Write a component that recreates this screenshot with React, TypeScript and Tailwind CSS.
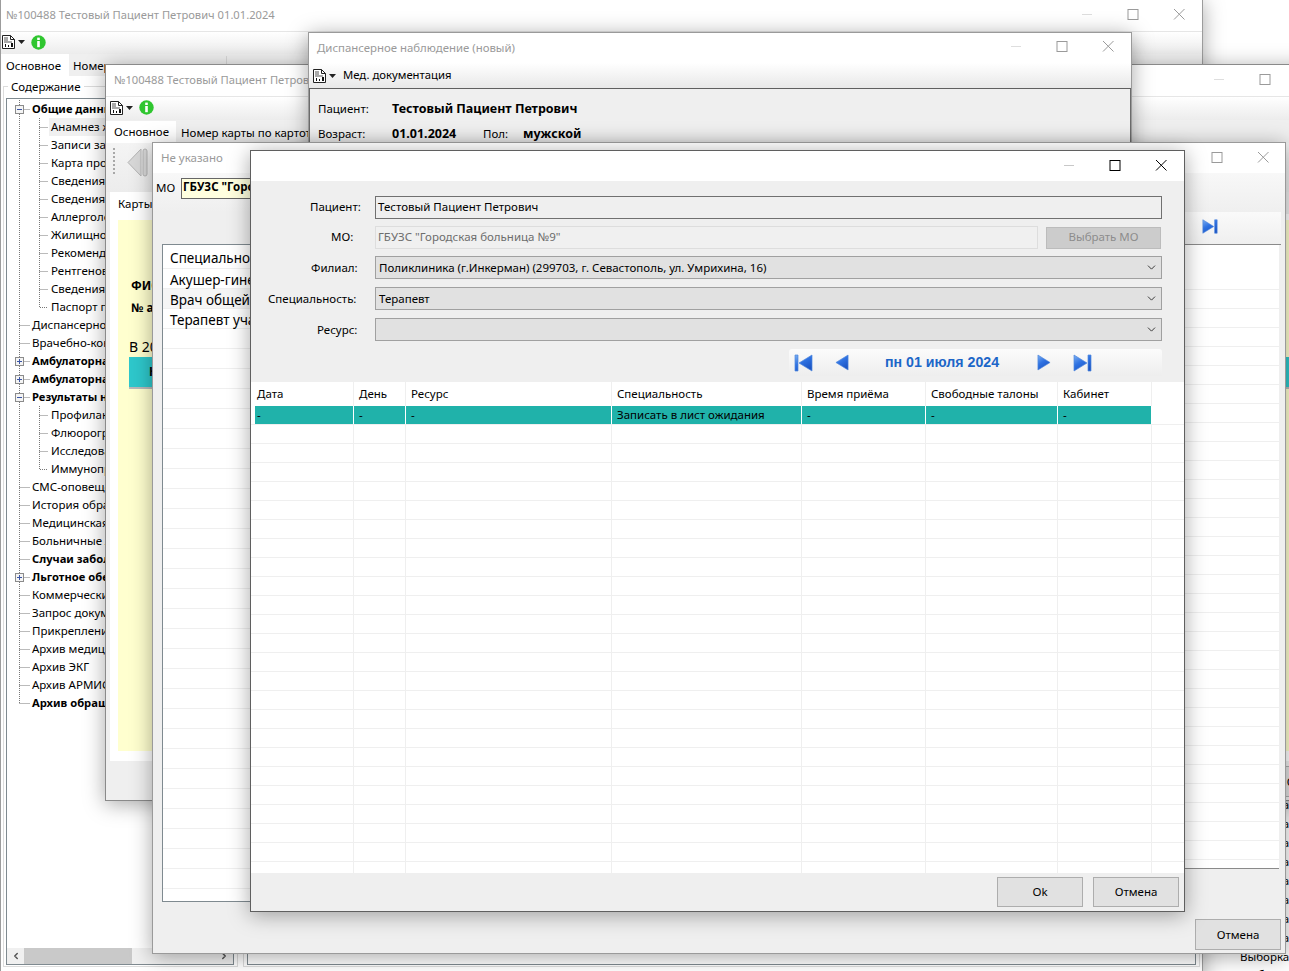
import type { ReactNode } from 'react';
import { ChevronDown, ChevronLeft, ChevronRight } from 'lucide-react';

const FONT = "font-['Noto_Sans','Open_Sans',sans-serif]";

const tree: { t: string; lvl: 0 | 1; bold?: boolean; box?: '+' | '-'; last?: boolean; active?: boolean }[] = [
  { t: 'Общие данные', lvl: 0, bold: true, box: '-' },
  { t: 'Анамнез жизни', lvl: 1, active: true },
  { t: 'Записи за период', lvl: 1 },
  { t: 'Карта профилактики', lvl: 1 },
  { t: 'Сведения о прививках', lvl: 1 },
  { t: 'Сведения о родах', lvl: 1 },
  { t: 'Аллергологический', lvl: 1 },
  { t: 'Жилищно-бытовые', lvl: 1 },
  { t: 'Рекомендации', lvl: 1 },
  { t: 'Рентгеновские', lvl: 1 },
  { t: 'Сведения об учёте', lvl: 1 },
  { t: 'Паспорт пациента', lvl: 1, last: true },
  { t: 'Диспансерное', lvl: 0 },
  { t: 'Врачебно-контрольная', lvl: 0 },
  { t: 'Амбулаторная карта', lvl: 0, bold: true, box: '+' },
  { t: 'Амбулаторная помощь', lvl: 0, bold: true, box: '+' },
  { t: 'Результаты наблюдения', lvl: 0, bold: true, box: '-' },
  { t: 'Профилактика', lvl: 1 },
  { t: 'Флюорография', lvl: 1 },
  { t: 'Исследования', lvl: 1 },
  { t: 'Иммунопрофилактика', lvl: 1, last: true },
  { t: 'СМС-оповещение', lvl: 0 },
  { t: 'История обращений', lvl: 0 },
  { t: 'Медицинская карта', lvl: 0 },
  { t: 'Больничные листы', lvl: 0 },
  { t: 'Случаи заболевания', lvl: 0, bold: true },
  { t: 'Льготное обеспечение', lvl: 0, bold: true, box: '+' },
  { t: 'Коммерческие услуги', lvl: 0 },
  { t: 'Запрос документов', lvl: 0 },
  { t: 'Прикрепление', lvl: 0 },
  { t: 'Архив медицинских', lvl: 0 },
  { t: 'Архив ЭКГ', lvl: 0 },
  { t: 'Архив АРМИС', lvl: 0 },
  { t: 'Архив обращений', lvl: 0, bold: true },
];

const columns = [
  { t: 'Дата', w: 'w-[99px]', v: '-' },
  { t: 'День', w: 'w-[52px]', v: '-' },
  { t: 'Ресурс', w: 'w-[206px]', v: '-' },
  { t: 'Специальность', w: 'w-[190px]', v: 'Записать в лист ожидания' },
  { t: 'Время приёма', w: 'w-[124px]', v: '-' },
  { t: 'Свободные талоны', w: 'w-[132px]', v: '-' },
  { t: 'Кабинет', w: 'w-[94px]', v: '-' },
];

function DocIcon() {
  return (
    <svg width="13" height="14" viewBox="0 0 13 14" className="shrink-0">
      <path d="M.5.5h8l4 4v9H.5z" fill="#fff" stroke="#222" />
      <path d="M8.5.5v4h4" fill="none" stroke="#222" />
      <path d="M2 3h4M2 5h4M2 7h8" stroke="#555" />
      <path d="M3 12V9h1v3zM6 12V10h1v2zM9 12V8h2v4z" fill="#111" />
    </svg>
  );
}

function Caret() {
  return (
    <svg width="7" height="4" viewBox="0 0 7 4" className="shrink-0">
      <path d="M0 0h7L3.5 4z" fill="#222" />
    </svg>
  );
}

function InfoIcon() {
  return (
    <svg width="15" height="15" viewBox="0 0 15 15" className="shrink-0">
      <circle cx="7.5" cy="7.5" r="7.2" fill="#2fc62f" />
      <rect x="6.2" y="2.6" width="2.6" height="2.4" fill="#fff" />
      <rect x="6.2" y="6" width="2.6" height="6.2" fill="#fff" />
    </svg>
  );
}

function NavIcon({ kind, w, h }: { kind: 'first' | 'prev' | 'next' | 'last'; w: number; h: number }) {
  const d = {
    first: 'M1 1h3v16H1zM18 1v16L5 9z',
    prev: 'M14 1v16L1 9z',
    next: 'M1 1v16L14 9z',
    last: 'M1 1v16l13-8zM15 1h3v16h-3z',
  }[kind];
  const vb = kind === 'first' || kind === 'last' ? '0 0 19 18' : '0 0 15 18';
  return (
    <svg width={w} height={h} viewBox={vb} className="shrink-0">
      <defs>
        <linearGradient id="navblue" x1="0" y1="0" x2="0.6" y2="1">
          <stop offset="0" stopColor="#7db0f2" />
          <stop offset="0.5" stopColor="#2f72e2" />
          <stop offset="1" stopColor="#1c55c4" />
        </linearGradient>
      </defs>
      <path d={d} fill="url(#navblue)" stroke="#4f86dc" strokeWidth="0.7" />
    </svg>
  );
}

function WinButtons({ dark, className = '' }: { dark?: boolean; className?: string }) {
  const c = dark ? '#000' : '#9a9a9a';
  return (
    <div className={`mb-[2px] ml-auto flex items-center ${className}`}>
      <div className="flex w-[46px] justify-center">
        <div className={dark ? 'h-px w-[10px] bg-[#c8c8c8]' : 'h-px w-[10px] bg-[#dedede]'} />
      </div>
      <svg width="46" height="11" viewBox="0 0 46 11">
        <rect x="18" y="0.5" width="10" height="10" fill="none" stroke={c} />
      </svg>
      <svg width="46" height="11" viewBox="0 0 46 11">
        <path d="M18 0l10.5 10.5M28.5 0L18 10.5" stroke={c} />
      </svg>
    </div>
  );
}

function Win({ className, children }: { className: string; children: ReactNode }) {
  return (
    <div className={`absolute flex flex-col overflow-hidden border bg-[#efefef] shadow-[0_3px_20px_rgba(0,0,0,0.35)] ${className}`}>
      {children}
    </div>
  );
}

function TreeRow({ item, index }: { item: (typeof tree)[number]; index: number }) {
  const isLast = index === tree.length - 1;
  const width = item.lvl === 0 ? 23 : 42;
  return (
    <div className="flex h-[18px] items-center">
      <svg width={width} height="18" viewBox={`0 0 ${width} 18`} className="shrink-0">
        <path
          d={isLast ? 'M12.5 0v9' : 'M12.5 0v18'}
          stroke="#777"
          strokeDasharray="1 1"
          fill="none"
        />
        {item.lvl === 0 && <path d="M12.5 9.5H23" stroke="#777" strokeDasharray="1 1" />}
        {item.lvl === 1 && (
          <path d={item.last ? 'M32.5 0v9.5H41' : 'M32.5 0v18M32.5 9.5H41'} stroke="#777" strokeDasharray="1 1" fill="none" />
        )}
        {item.box && (
          <>
            <rect x="8.5" y="5.5" width="8" height="8" fill="#f4f4f4" stroke="#8b8b8b" />
            <path d="M10 9.5h5" stroke="#3b55a5" />
            {item.box === '+' && <path d="M12.5 7v5" stroke="#3b55a5" />}
          </>
        )}
      </svg>
      <span className={`whitespace-nowrap px-[2px] leading-[18px] ${item.bold ? 'text-[11.2px] font-bold' : ''} ${item.active ? 'bg-[#f0f0f0]' : ''}`}>
        {item.t}
      </span>
    </div>
  );
}

function MainWindow() {
  return (
    <Win className="left-0 top-[-1px] h-[990px] w-[1203px] border-[#9c9c9c]">
      <div className="flex h-[31px] shrink-0 items-center bg-white pl-[5px] text-[#9a9a9a]">
        <span className="text-[11.2px]">№100488 Тестовый Пациент Петрович 01.01.2024</span>
        <WinButtons />
      </div>
      <div className="flex h-[23px] shrink-0 items-center gap-[3px] border-t border-[#e6e6e6] bg-gradient-to-b from-white to-[#ececec] pb-[2px] pl-[1px]">
        <DocIcon />
        <Caret />
        <div className="ml-[3px]"><InfoIcon /></div>
      </div>
      <div className="flex h-[22px] shrink-0 items-end bg-[#efefef] text-[11.5px]">
        <div className="flex h-[22px] w-[68px] items-center bg-white pl-[5px] pt-[2px]">Основное</div>
        <div className="flex h-[20px] w-[158px] items-center border-r border-[#d8d8d8] pl-[4px]">Номер карты</div>
      </div>
      <div className="flex min-h-0 flex-1 gap-[5px] bg-white px-[2px] pt-[10px]">
        <div className="relative mb-[5px] h-[881px] w-[235px] border border-[#dcdcdc] pb-[1px] pl-[2px] pr-[3px] pt-[11px]">
          <span className="absolute left-[4px] top-[-9px] bg-white px-[3px] text-[11.5px]">Содержание</span>
          <div className="flex h-[867px] flex-col justify-between border border-[#7f8a90] pl-0 pt-[1px] text-[11.5px]">
            <div>
              {tree.map((item, i) => (
                <TreeRow key={i} item={item} index={i} />
              ))}
            </div>
            <div className="flex h-[16px] items-center bg-[#f0f0f0]">
              <div className="flex w-[17px] justify-center">
                <ChevronLeft size={10} strokeWidth={3.5} className="text-[#555]" />
              </div>
              <div className="h-full w-[108px] bg-[#c9c9c9]" />
              <div className="ml-auto flex w-[18px] justify-center">
                <ChevronRight size={10} strokeWidth={3.5} className="text-[#555]" />
              </div>
            </div>
          </div>
        </div>
        <div className="mb-[5px] h-[881px] flex-1 border border-[#dcdcdc] p-[3px] pb-[1px]">
          <div className="h-[875px] border border-[#7f8a90]" />
        </div>
      </div>
    </Win>
  );
}

function CardWindow() {
  return (
    <Win className="left-[105px] top-[64px] h-[737px] w-[1250px] border-[#8a8a8a]">
      <div className="flex h-[31px] shrink-0 items-center bg-white pl-[8px] text-[#9a9a9a]">
        <span className="whitespace-nowrap pb-[1px] text-[11.2px]">№100488 Тестовый Пациент Петрович 01.01.2024</span>
        <WinButtons className="pr-[20px]" />
      </div>
      <div className="flex h-[24px] shrink-0 items-center gap-[3px] border-t border-[#e6e6e6] bg-gradient-to-b from-white to-[#ececec] pb-[2px] pl-[4px]">
        <DocIcon />
        <Caret />
        <div className="ml-[3px]"><InfoIcon /></div>
      </div>
      <div className="flex h-[23px] shrink-0 items-end text-[11.5px]">
        <div className="flex h-[22px] w-[70px] items-center bg-white pl-[8px]">Основное</div>
        <div className="flex h-[20px] items-center whitespace-nowrap pl-[5px]">Номер карты по картотеке</div>
      </div>
      <div className="flex h-[49px] shrink-0 items-start bg-gradient-to-b from-[#f4f4f4] to-[#ececec] pl-[7px] pt-[5px]">
        <div className="h-[26px] border-l-2 border-dotted border-[#a8a8a8]" />
        <svg width="21" height="29" viewBox="0 0 21 29" className="ml-[12px] shrink-0">
          <path d="M14 1v27L1 14.5z" fill="#d8d8d8" stroke="#b4b4b4" />
          <rect x="16" y="1" width="4" height="27" rx="2" fill="#d8d8d8" stroke="#b4b4b4" />
        </svg>
      </div>
      <div className="flex h-[22px] shrink-0 bg-[#efefef] pl-[4px] text-[11.5px]">
        <div className="w-[46px] bg-white pl-[8px] pt-[3px]">Карты</div>
      </div>
      <div className="ml-[4px] flex h-[547px] shrink-0 bg-white pb-[10px] pl-[8px] pt-[6px]">
        <div className="flex-1 bg-[#ffffcf] pl-[11px] text-[12px]">
          <div className="pl-[2px] pt-[57px] font-bold">ФИО пациента</div>
          <div className="pl-[2px] pt-[4px] font-bold">№ амбулаторной карты</div>
          <div className="pt-[20px] text-[14px] leading-[20px]">В 2024 году</div>
          <div className="flex h-[32px] items-center border-b-2 border-[#b9b9b9] bg-[#2ec8cc] pl-[20px] font-bold">Карта</div>
        </div>
      </div>
      <div className="ml-[1159px] mt-[5px] flex h-[31px] w-[86px] shrink-0 items-center justify-center border border-[#adadad] bg-[#e1e1e1] text-[11.5px]">Отмена</div>
    </Win>
  );
}

function DispWindow() {
  return (
    <Win className="left-[308px] top-[32px] h-[300px] w-[824px] border-[#9a9a9a]">
      <div className="flex h-[30px] shrink-0 items-center bg-white pb-[1px] pl-[8px] text-[11.4px] text-[#9a9a9a]">
        Диспансерное наблюдение (новый)
        <WinButtons />
      </div>
      <div className="flex h-[26px] shrink-0 items-center gap-[3px] border-b border-[#5f5f5f] bg-gradient-to-b from-white to-[#e8e8e8] pl-[4px] text-[11.3px]">
        <DocIcon />
        <Caret />
        <span className="ml-[4px]">Мед. документация</span>
      </div>
      <div className="flex-1 border-x border-[#6b6b6b] pl-[8px] pt-[10px] text-[11.5px]">
        <div className="flex h-[20px] items-center">
          <span className="w-[74px]">Пациент:</span>
          <span className="text-[12.5px] font-bold">Тестовый Пациент Петрович</span>
        </div>
        <div className="mt-[5px] flex h-[20px] items-center">
          <span className="w-[74px]">Возраст:</span>
          <span className="w-[91px] text-[12.5px] font-bold">01.01.2024</span>
          <span className="w-[40px]">Пол:</span>
          <span className="text-[12.5px] font-bold">мужской</span>
        </div>
      </div>
    </Win>
  );
}

function ListWindow() {
  return (
    <Win className="left-[152px] top-[142px] h-[812px] w-[1134px] border-[#9a9a9a]">
      <div className="flex h-[30px] shrink-0 items-center bg-white pl-[8px] text-[11.5px] text-[#9a9a9a]">
        Не указано
        <WinButtons className="-mr-px" />
      </div>
      <div className="flex h-[39px] shrink-0 items-start bg-gradient-to-b from-[#f8f8f8] to-[#efefef] pl-[3px] pt-[5px] text-[11.5px]">
        <span className="w-[25px] pt-[1px]">МО</span>
        <div className="h-[21px] w-[300px] whitespace-nowrap border border-[#666] bg-[#ffffdf] pl-[1px] font-bold leading-[16px]">ГБУЗС "Городская больница №9"</div>
      </div>
      <div className="flex h-[690px] shrink-0">
        <div className="ml-[9px] mt-[32px] h-[658px] w-[400px] overflow-hidden border border-[#7f8a90] bg-white text-[13.5px]">
          <div className="flex h-[24px] items-center border-b border-[#efefef] pl-[7px] pt-[3px]">Специальность</div>
          <div className="flex h-[20px] items-center border-b border-[#efefef] pl-[7px] pt-[4px]">Акушер-гинеколог</div>
          <div className="flex h-[20px] items-center border-b border-[#efefef] bg-[#f5f5f5] pl-[7px] pt-[4px]">Врач общей практики</div>
          <div className="flex h-[20px] items-center border-b border-[#efefef] pl-[7px] pt-[4px]">Терапевт участковый</div>
          {Array.from({ length: 29 }, (_, i) => (
            <div key={i} className="h-[20px] border-b border-[#efefef]" />
          ))}
        </div>
        <div className="ml-[16px] flex h-[657px] flex-1 flex-col pr-[6px]">
          <div className="-mr-[2px] flex h-[33px] shrink-0 items-center justify-end border-b border-[#8a8a8a] bg-gradient-to-b from-[#fafafa] to-[#efefef] pb-[4px] pr-[63px]">
            <NavIcon kind="last" w={16} h={17} />
          </div>
          <div className="flex-1 overflow-hidden border-b border-[#8a8a8a] bg-white pt-[44px]">
            {Array.from({ length: 31 }, (_, i) => (
              <div key={i} className="h-[19px] border-t border-[#efefef]" />
            ))}
          </div>
        </div>
      </div>
      <div className="ml-auto mr-[4px] mt-[17px] flex h-[31px] w-[86px] shrink-0 items-center justify-center border border-[#adadad] bg-[#e1e1e1] text-[11.5px]">Отмена</div>
    </Win>
  );
}

function Label({ children, className }: { children: ReactNode; className: string }) {
  return <span className={`shrink-0 text-[11.5px] ${className}`}>{children}</span>;
}

function Select({ value }: { value?: string }) {
  return (
    <div className="flex h-[23px] w-[787px] items-center border border-[#a0a0a0] bg-[#e1e1e1] pl-[3px] pr-[3px] text-[11.5px]">
      {value}
      <ChevronDown size={13} strokeWidth={1.6} className="ml-auto text-[#222]" />
    </div>
  );
}

function Dialog() {
  return (
    <Win className="left-[250px] top-[150px] h-[762px] w-[935px] border-[#5f5f5f]">
      <div className="flex h-[30px] shrink-0 items-center bg-white"><WinButtons dark /></div>
      <div className="flex h-[168px] shrink-0 flex-col pt-[15px]">
        <div className="flex h-[23px] items-center pl-[59px]">
          <Label className="w-[65px] pb-[2px]">Пациент:</Label>
          <div className="flex h-[23px] w-[787px] items-center border border-[#707070] pb-[2px] pl-[2px] text-[11.5px]">Тестовый Пациент Петрович</div>
        </div>
        <div className="mt-[7px] flex h-[23px] items-center pl-[80px]">
          <Label className="w-[44px] pb-[2px]">МО:</Label>
          <div className="flex h-[23px] w-[663px] items-center border border-[#dddddd] bg-[#f0f0f0] pb-[2px] pl-[2px] text-[11.5px] text-[#6d6d6d]">ГБУЗС "Городская больница №9"</div>
          <div className="ml-[8px] flex h-[22px] w-[115px] items-center justify-center border border-[#bcbcbc] bg-[#cccccc] pb-[2px] text-[11.5px] text-[#8c8c8c]">Выбрать МО</div>
        </div>
        <div className="mt-[7px] flex h-[23px] items-center pl-[60px]">
          <Label className="w-[64px]">Филиал:</Label>
          <Select value="Поликлиника (г.Инкерман) (299703, г. Севастополь, ул. Умрихина, 16)" />
        </div>
        <div className="mt-[8px] flex h-[23px] items-center pl-[17px]">
          <Label className="w-[107px]">Специальность:</Label>
          <Select value="Терапевт" />
        </div>
        <div className="mt-[8px] flex h-[23px] items-center pl-[66px]">
          <Label className="w-[58px]">Ресурс:</Label>
          <Select />
        </div>
      </div>
      <div className="ml-[538px] flex h-[27px] w-[373px] shrink-0 items-center rounded-t-[3px] bg-gradient-to-b from-[#fbfbfb] to-[#eeeeee] pl-[5px]">
        <NavIcon kind="first" w={19} h={18} />
        <div className="ml-[22px]"><NavIcon kind="prev" w={14} h={17} /></div>
        <span className="ml-[36px] w-[115px] whitespace-nowrap pt-[1px] font-['Liberation_Sans',sans-serif] text-[14.2px] font-bold text-[#1c66c8]">пн 01 июля 2024</span>
        <div className="ml-[37px]"><NavIcon kind="next" w={14} h={17} /></div>
        <div className="ml-[22px]"><NavIcon kind="last" w={19} h={18} /></div>
      </div>
      <div className="mt-[6px] flex min-h-0 flex-1 flex-col overflow-hidden bg-white text-[11.5px]">
        <div className="flex h-[24px] shrink-0 pl-[4px]">
          {columns.map((c) => (
            <div key={c.t} className={`flex items-center border-r border-[#efefef] pl-[5px] ${c.w} first:pl-[2px]`}>{c.t}</div>
          ))}
        </div>
        <div className="flex h-[19px] shrink-0 border-b border-[#efefef] pl-[4px]">
          {columns.map((c) => (
            <div key={c.t} className={`flex items-center border-r border-white bg-[#20b2aa] pl-[5px] ${c.w} first:pl-[2px]`}>{c.v}</div>
          ))}
        </div>
        {Array.from({ length: 26 }, (_, i) => (
          <div key={i} className="flex h-[19px] shrink-0 border-b border-[#efefef] pl-[4px]">
            {columns.map((c) => (
              <div key={c.t} className={`border-r border-[#efefef] ${c.w}`} />
            ))}
          </div>
        ))}
      </div>
      <div className="flex h-[38px] shrink-0 items-center justify-end gap-[10px] pr-[5px] text-[11.5px]">
        <div className="flex h-[30px] w-[86px] items-center justify-center border border-[#adadad] bg-[#e1e1e1]">Ok</div>
        <div className="flex h-[30px] w-[86px] items-center justify-center border border-[#adadad] bg-[#e1e1e1]">Отмена</div>
      </div>
    </Win>
  );
}

export default function App() {
  return (
    <div className={`relative h-[971px] w-[1289px] overflow-hidden bg-white text-black ${FONT}`}>
      {/* окно позади всех, видна только полоска справа */}
      <div className="absolute left-[1240px] top-[795px] text-[11.5px]">
        {Array.from({ length: 9 }, (_, i) => (
          <div key={i} className="h-[19px] leading-[19px]">Выборка</div>
        ))}
        <div className="h-[19px] font-bold leading-[19px]">Выборка</div>
      </div>
      <MainWindow />
      <CardWindow />
      <DispWindow />
      <ListWindow />
      <Dialog />
    </div>
  );
}
